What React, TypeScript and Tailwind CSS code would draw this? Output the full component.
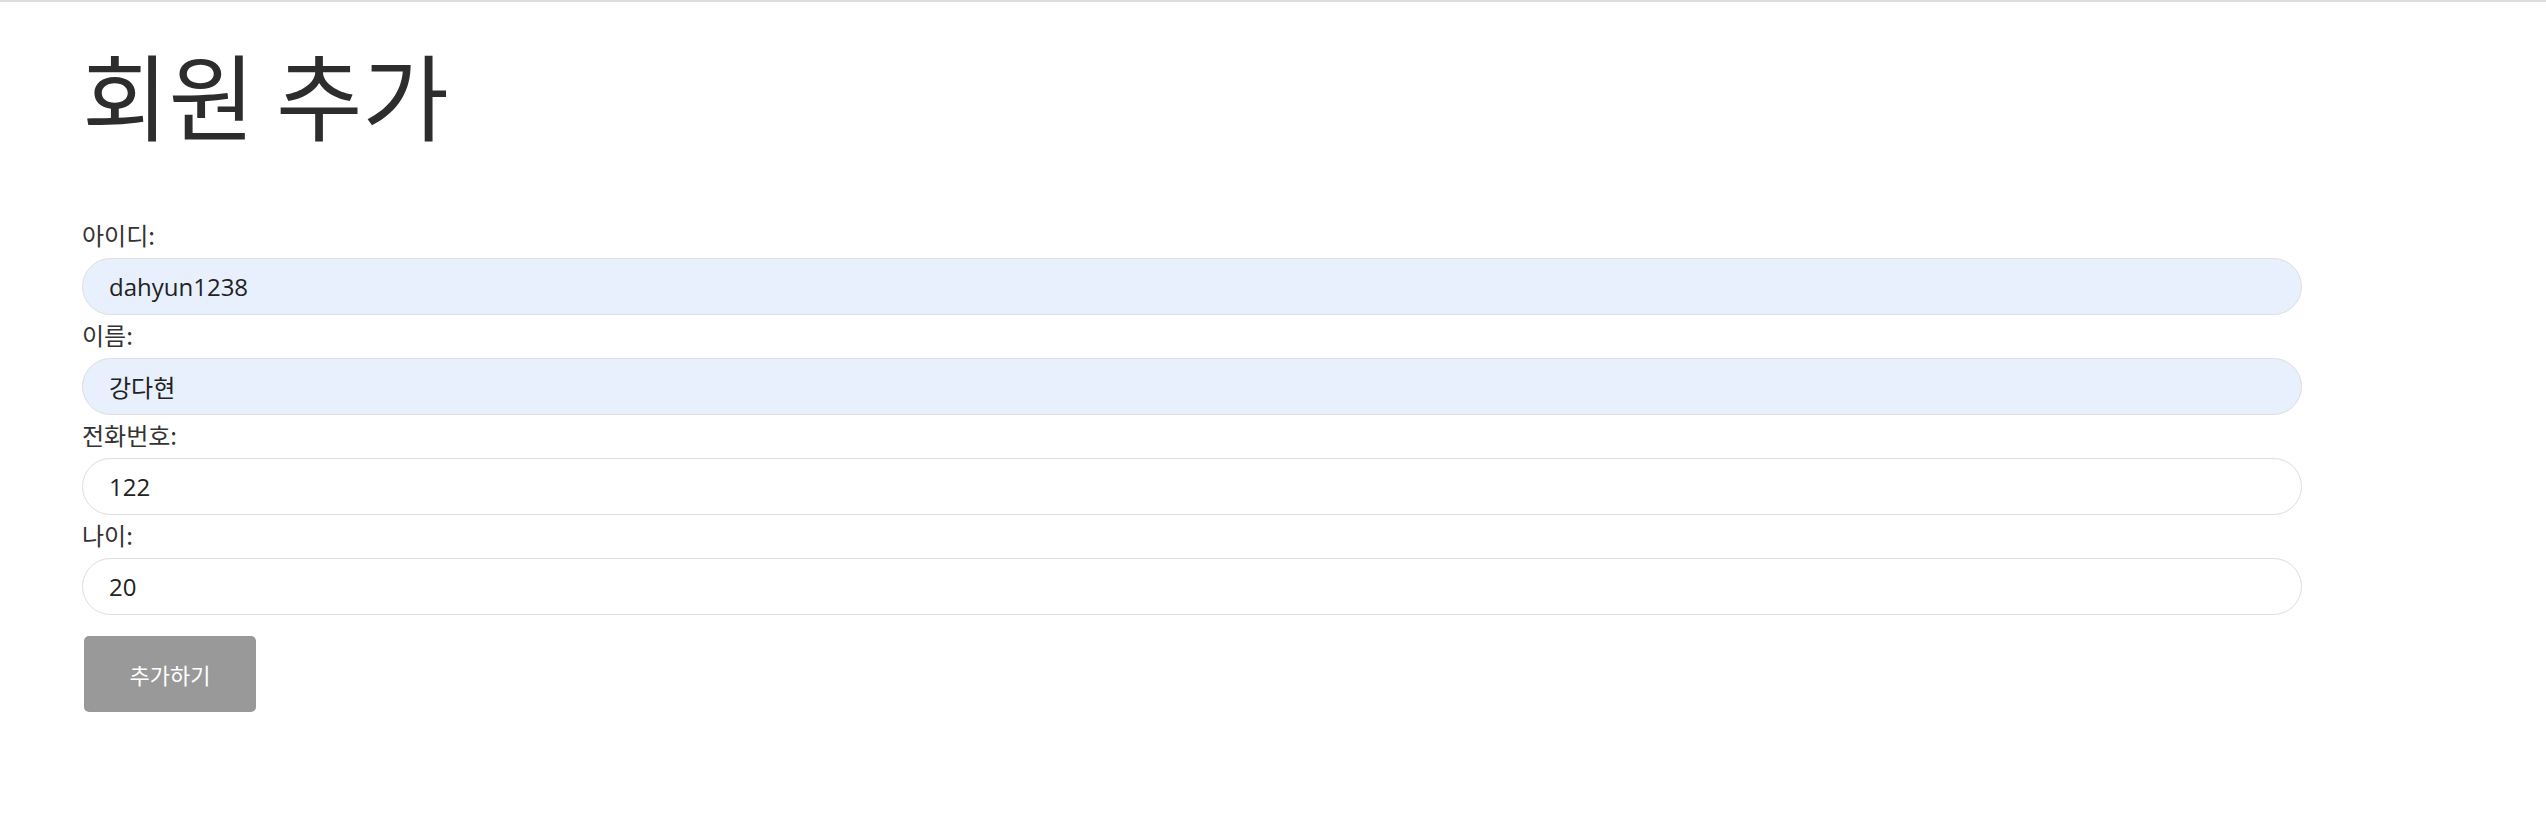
import React from "react";

const fields = [
  { label: "아이디:", value: "dahyun1238", filled: true },
  { label: "이름:", value: "강다현", filled: true },
  { label: "전화번호:", value: "122", filled: false },
  { label: "나이:", value: "20", filled: false },
];

const App = () => {
  return (
    <div className="min-h-screen bg-white border-t-2 border-[#dcdce0] font-['Noto_Sans_CJK_KR',sans-serif]">
      <div className="px-[82px]">
        <h1 className="pt-[44px] text-[94px] leading-none font-normal text-[#2d2d2d]">
          회원 추가
        </h1>

        <form className="mt-[75px] flex flex-col items-start" onSubmit={(e) => e.preventDefault()}>
          {fields.map((f) => (
            <div key={f.label} className="flex flex-col">
              <label className="h-[43px] leading-[40px] text-[24px] text-[#333333]">
                {f.label}
              </label>
              <input
                defaultValue={f.value}
                className={
                  "h-[57px] w-[2220px] rounded-full border border-[#dedede] pl-[26px] text-[24px] text-[#222222] outline-none font-['Open_Sans','Noto_Sans_CJK_KR',sans-serif] " +
                  (f.filled ? "bg-[#e8f0fe]" : "bg-white")
                }
              />
            </div>
          ))}

          <button
            type="submit"
            className="mt-[21px] ml-[2px] w-[172px] h-[76px] rounded-[5px] bg-[#999999] text-white text-[22px] leading-[72px]"
          >
            추가하기
          </button>
        </form>
      </div>
    </div>
  );
};

export default App;
